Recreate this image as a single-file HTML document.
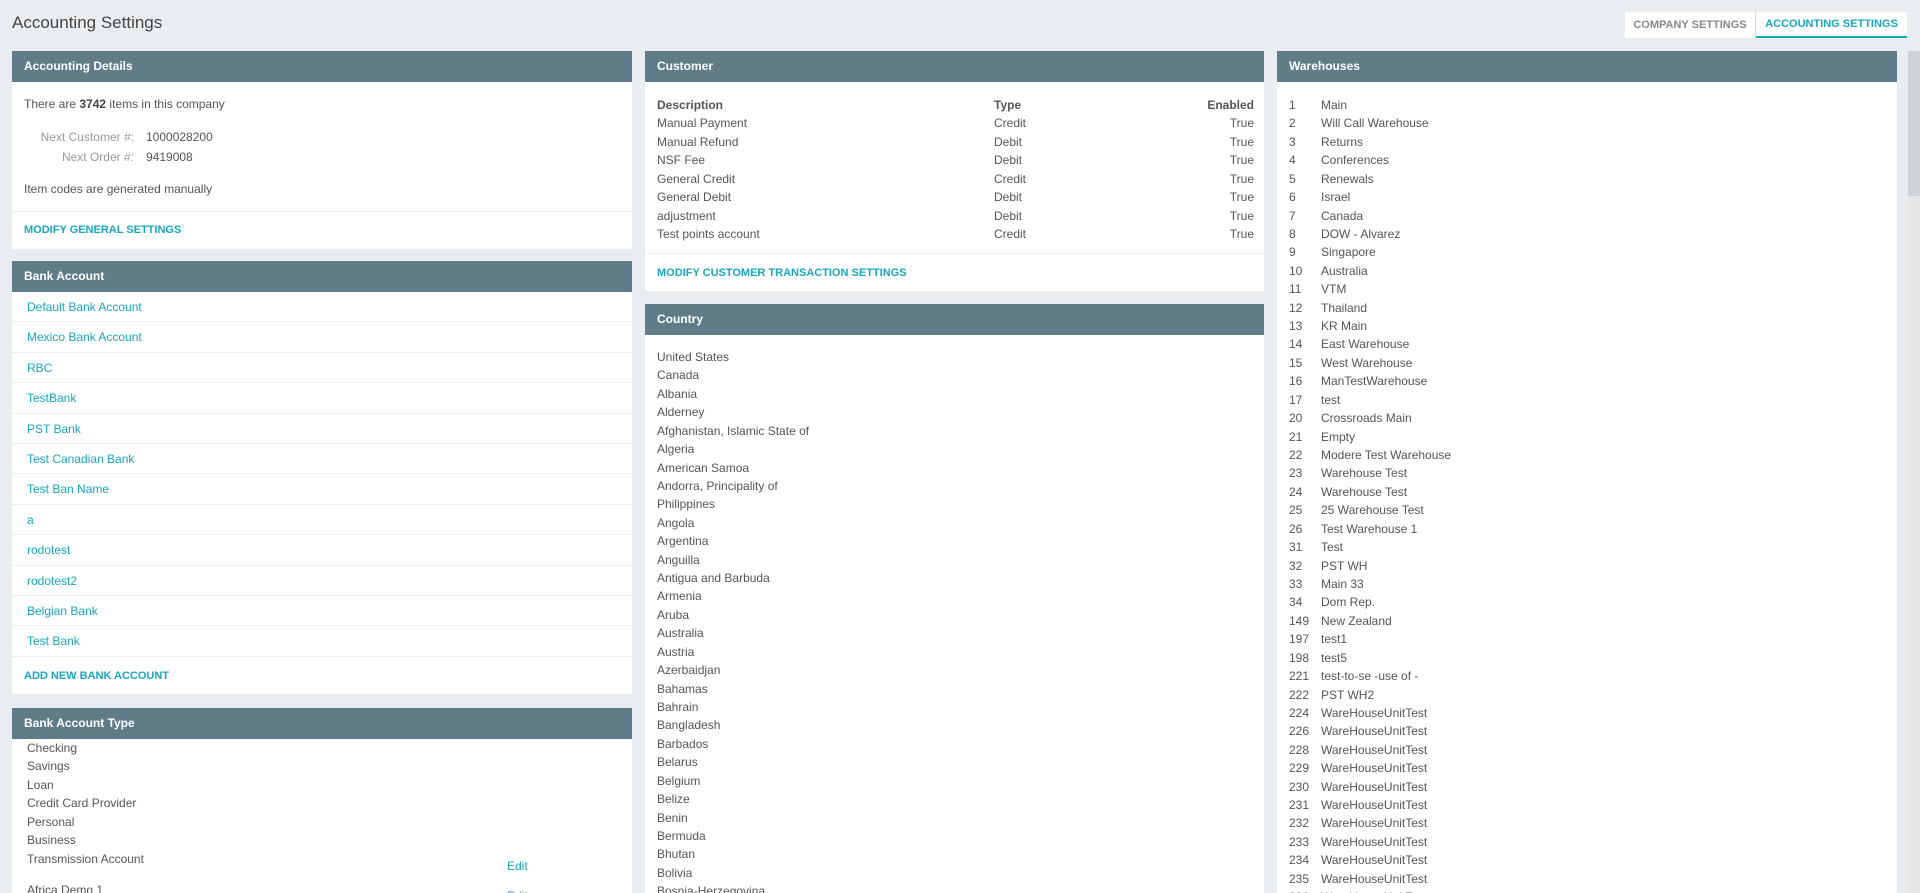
<!DOCTYPE html>
<html><head><meta charset="utf-8"><style>
*{box-sizing:border-box;margin:0;padding:0}
html,body{width:1920px;height:893px;overflow:hidden}
body{background:#eaedf0;font-family:"Liberation Sans",Arial,sans-serif;font-size:12px;color:#555;position:relative}
.title{position:absolute;left:12px;top:13px;font-size:17px;color:#444}
.tabs{position:absolute;left:1625px;top:12px;width:282px;height:26px;background:#fff;display:flex;font-size:11px;font-weight:bold}
.tabs div{display:flex;align-items:center;justify-content:center}
.t1{width:131px;color:#888;border-right:1px solid #ddd}
.t2{flex:1;color:#17a7bf;border-bottom:2px solid #17a7bf}
.panel{position:absolute;background:#fff;overflow:hidden}
.hd{height:31px;background:#607c89;color:#fff;font-weight:bold;font-size:12px;line-height:31px;padding-left:12px}
.link{color:#17a7bf;font-weight:bold;font-size:11px}
.abs{position:absolute;white-space:nowrap}
.lst div{height:18.43px;line-height:18.43px;white-space:nowrap}
.bank div{height:30.4px;line-height:30.4px;border-bottom:1px solid #eceeef;color:#17a7bf;padding-left:15px}
.scroll{position:absolute;left:1908px;top:51px;width:12px;height:842px;background:#e4e6e8}
.thumb{position:absolute;left:1908px;top:51px;width:12px;height:145px;background:#cfd3d6}
</style></head><body>
<div class="title">Accounting Settings</div>
<div class="tabs"><div class="t1">COMPANY SETTINGS</div><div class="t2">ACCOUNTING SETTINGS</div></div>

<div class="panel" style="left:12px;top:51px;width:620px;height:198px">
<div class="hd">Accounting Details</div>
<div class="abs" style="left:12px;top:46px">There are <b style="color:#444">3742</b> items in this company</div>
<div class="abs" style="left:0;width:122px;text-align:right;top:79px;color:#999">Next Customer #:</div>
<div class="abs" style="left:134px;top:79px">1000028200</div>
<div class="abs" style="left:0;width:122px;text-align:right;top:99px;color:#999">Next Order #:</div>
<div class="abs" style="left:134px;top:99px">9419008</div>
<div class="abs" style="left:12px;top:131px">Item codes are generated manually</div>
<div class="abs" style="left:0;right:0;top:160px;border-top:1px solid #eceeef"></div>
<div class="abs link" style="left:12px;top:173px">MODIFY GENERAL SETTINGS</div>
</div>

<div class="panel" style="left:12px;top:261px;width:620px;height:433px">
<div class="hd">Bank Account</div>
<div class="bank"><div>Default Bank Account</div><div>Mexico Bank Account</div><div>RBC</div><div>TestBank</div><div>PST Bank</div><div>Test Canadian Bank</div><div>Test Ban Name</div><div>a</div><div>rodotest</div><div>rodotest2</div><div>Belgian Bank</div><div>Test Bank</div></div>
<div class="abs link" style="left:12px;top:409px">ADD NEW BANK ACCOUNT</div>
</div>

<div class="panel" style="left:12px;top:708px;width:620px;height:185px">
<div class="hd">Bank Account Type</div>
<div class="lst" style="padding-left:15px"><div>Checking</div><div>Savings</div><div>Loan</div><div>Credit Card Provider</div><div>Personal</div><div>Business</div><div>Transmission Account</div></div>
<div class="abs" style="left:495px;top:151px;color:#17a7bf">Edit</div>
<div class="abs" style="left:15px;top:175px">Africa Demo 1</div>
<div class="abs" style="left:495px;top:181px;color:#17a7bf">Edit</div>
</div>

<div class="panel" style="left:645px;top:51px;width:619px;height:240px">
<div class="hd">Customer</div>
<div class="lst abs" style="left:12px;top:45px;width:597px">
<div style="font-weight:bold;color:#555;position:relative">Description<span class="abs" style="left:337px">Type</span><span class="abs" style="right:0">Enabled</span></div>
<div style="position:relative">Manual Payment<span class="abs" style="left:337px">Credit</span><span class="abs" style="right:0">True</span></div>
<div style="position:relative">Manual Refund<span class="abs" style="left:337px">Debit</span><span class="abs" style="right:0">True</span></div>
<div style="position:relative">NSF Fee<span class="abs" style="left:337px">Debit</span><span class="abs" style="right:0">True</span></div>
<div style="position:relative">General Credit<span class="abs" style="left:337px">Credit</span><span class="abs" style="right:0">True</span></div>
<div style="position:relative">General Debit<span class="abs" style="left:337px">Debit</span><span class="abs" style="right:0">True</span></div>
<div style="position:relative">adjustment<span class="abs" style="left:337px">Debit</span><span class="abs" style="right:0">True</span></div>
<div style="position:relative">Test points account<span class="abs" style="left:337px">Credit</span><span class="abs" style="right:0">True</span></div>
</div>
<div class="abs" style="left:0;right:0;top:202px;border-top:1px solid #eceeef"></div>
<div class="abs link" style="left:12px;top:216px">MODIFY CUSTOMER TRANSACTION SETTINGS</div>
</div>

<div class="panel" style="left:645px;top:304px;width:619px;height:589px">
<div class="hd">Country</div>
<div class="lst" style="padding:13px 0 0 12px">
<div>United States</div><div>Canada</div><div>Albania</div><div>Alderney</div><div>Afghanistan, Islamic State of</div><div>Algeria</div><div>American Samoa</div><div>Andorra, Principality of</div><div>Philippines</div><div>Angola</div><div>Argentina</div><div>Anguilla</div><div>Antigua and Barbuda</div><div>Armenia</div><div>Aruba</div><div>Australia</div><div>Austria</div><div>Azerbaidjan</div><div>Bahamas</div><div>Bahrain</div><div>Bangladesh</div><div>Barbados</div><div>Belarus</div><div>Belgium</div><div>Belize</div><div>Benin</div><div>Bermuda</div><div>Bhutan</div><div>Bolivia</div><div>Bosnia-Herzegovina</div>
</div></div>

<div class="panel" style="left:1277px;top:51px;width:620px;height:842px">
<div class="hd">Warehouses</div>
<div class="lst abs" style="left:12px;top:45px">
<div>1<span class="abs" style="left:32px">Main</span></div>
<div>2<span class="abs" style="left:32px">Will Call Warehouse</span></div>
<div>3<span class="abs" style="left:32px">Returns</span></div>
<div>4<span class="abs" style="left:32px">Conferences</span></div>
<div>5<span class="abs" style="left:32px">Renewals</span></div>
<div>6<span class="abs" style="left:32px">Israel</span></div>
<div>7<span class="abs" style="left:32px">Canada</span></div>
<div>8<span class="abs" style="left:32px">DOW - Alvarez</span></div>
<div>9<span class="abs" style="left:32px">Singapore</span></div>
<div>10<span class="abs" style="left:32px">Australia</span></div>
<div>11<span class="abs" style="left:32px">VTM</span></div>
<div>12<span class="abs" style="left:32px">Thailand</span></div>
<div>13<span class="abs" style="left:32px">KR Main</span></div>
<div>14<span class="abs" style="left:32px">East Warehouse</span></div>
<div>15<span class="abs" style="left:32px">West Warehouse</span></div>
<div>16<span class="abs" style="left:32px">ManTestWarehouse</span></div>
<div>17<span class="abs" style="left:32px">test</span></div>
<div>20<span class="abs" style="left:32px">Crossroads Main</span></div>
<div>21<span class="abs" style="left:32px">Empty</span></div>
<div>22<span class="abs" style="left:32px">Modere Test Warehouse</span></div>
<div>23<span class="abs" style="left:32px">Warehouse Test</span></div>
<div>24<span class="abs" style="left:32px">Warehouse Test</span></div>
<div>25<span class="abs" style="left:32px">25 Warehouse Test</span></div>
<div>26<span class="abs" style="left:32px">Test Warehouse 1</span></div>
<div>31<span class="abs" style="left:32px">Test</span></div>
<div>32<span class="abs" style="left:32px">PST WH</span></div>
<div>33<span class="abs" style="left:32px">Main 33</span></div>
<div>34<span class="abs" style="left:32px">Dom Rep.</span></div>
<div>149<span class="abs" style="left:32px">New Zealand</span></div>
<div>197<span class="abs" style="left:32px">test1</span></div>
<div>198<span class="abs" style="left:32px">test5</span></div>
<div>221<span class="abs" style="left:32px">test-to-se -use of -</span></div>
<div>222<span class="abs" style="left:32px">PST WH2</span></div>
<div>224<span class="abs" style="left:32px">WareHouseUnitTest</span></div>
<div>226<span class="abs" style="left:32px">WareHouseUnitTest</span></div>
<div>228<span class="abs" style="left:32px">WareHouseUnitTest</span></div>
<div>229<span class="abs" style="left:32px">WareHouseUnitTest</span></div>
<div>230<span class="abs" style="left:32px">WareHouseUnitTest</span></div>
<div>231<span class="abs" style="left:32px">WareHouseUnitTest</span></div>
<div>232<span class="abs" style="left:32px">WareHouseUnitTest</span></div>
<div>233<span class="abs" style="left:32px">WareHouseUnitTest</span></div>
<div>234<span class="abs" style="left:32px">WareHouseUnitTest</span></div>
<div>235<span class="abs" style="left:32px">WareHouseUnitTest</span></div>
<div>236<span class="abs" style="left:32px">WareHouseUnitTest</span></div>
</div></div>

<div class="scroll"></div><div class="thumb"></div>
</body></html>
